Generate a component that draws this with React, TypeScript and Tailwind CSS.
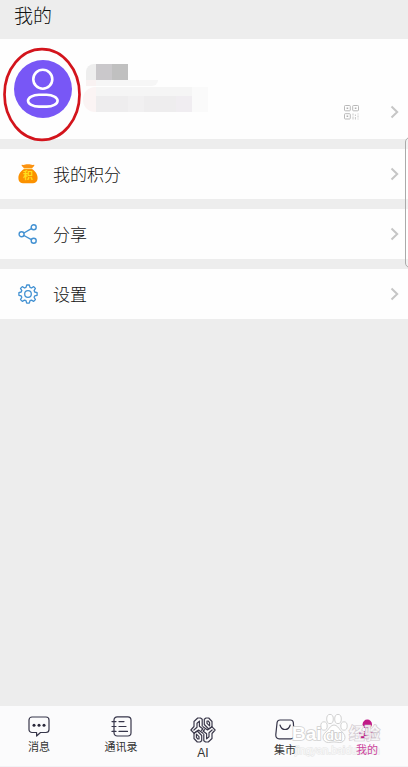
import type { ReactNode } from 'react';

const Chevron = () => (
  <svg className="h-[14px] w-[9px] shrink-0" viewBox="0 0 9 14" fill="none">
    <path d="M1.5 1.5 7.2 7l-5.7 5.5" stroke="#c6c6c6" strokeWidth="2" />
  </svg>
);

const Avatar = () => (
  <svg className="h-[58px] w-[58px]" viewBox="0 0 58 58" fill="none">
    <circle cx="29" cy="29" r="29" fill="#7857f6" />
    <g stroke="#fff" strokeWidth="2.6">
      <circle cx="28.8" cy="19.2" r="9.5" />
      <rect x="14" y="34.8" width="29.6" height="11.8" rx="11" ry="5.9" />
    </g>
  </svg>
);

const QrIcon = () => (
  <svg className="h-[15px] w-[15px]" viewBox="0 0 15 15" fill="none">
    <g stroke="#b9b9b9" strokeWidth="1">
      <rect x=".5" y=".5" width="5.8" height="5.3" rx=".8" />
      <rect x="8.7" y=".5" width="5.8" height="5.3" rx=".8" />
      <rect x=".5" y="8.7" width="5.8" height="5.3" rx=".8" />
    </g>
    <path d="M2.6 2.4h1.6v1.5H2.6zM10.8 2.4h1.6v1.5h-1.6zM2.6 10.6h1.6v1.5H2.6z" fill="#b0b0b0" />
    <path d="M9 8.5v2M9 11.5v3M11.4 9.5v1.5M11.4 12v2.5M14 8.5v1M14 10.5v2M14 13.5v1" stroke="#c8c8c8" />
  </svg>
);

const PointsIcon = () => (
  <span className="relative flex h-5 w-5 items-center justify-center">
    <svg className="absolute inset-0" viewBox="0 0 20 20">
      <path d="M4.3.7C6.2 1.3 7.3.2 10 .2s3.8 1.1 5.7.5c.8 0 .8.6.4 1.2L14 4.3H6L3.9 1.9C3.5 1.3 3.5.7 4.3.7Z" fill="#fb9211" />
      <path d="M6 5.1h8c3.2 1.8 5.6 5.3 5.6 8.9 0 3.900-2.400 5.300-5.600 5.300H6c-3.200 0-5.600-1.400-5.600-5.300C.4 10.400 2.800 6.900 6 5.100Z" fill="#fb9100" />
      <path d="M5.800 4.700h8.400" stroke="#ffd56a" strokeWidth=".8" />
    </svg>
    <span className="relative top-[2px] text-[10px] leading-none font-bold text-[#ffdf1e]">积</span>
  </span>
);

const ShareIcon = () => (
  <svg className="h-5 w-5" viewBox="0 0 20 20" fill="none" stroke="#4291d2" strokeWidth="1.4">
    <circle cx="3.6" cy="10.3" r="2.5" />
    <circle cx="15.7" cy="3.3" r="2.5" />
    <circle cx="15.7" cy="16.8" r="2.5" />
    <path d="m5.900 9 7.500-4.400M5.900 11.500l7.500 4.100" />
  </svg>
);

const SettingsIcon = () => (
  <svg className="h-5 w-5" viewBox="0 0 20 20" fill="none" stroke="#4291d2" strokeWidth="1.3" strokeLinejoin="round">
    <path d="M8.700 1h2.600l.7 2.400 1.400.6 2.300-1.400 1.700 1.800-1.300 2.200.6 1.400 2.400.6v2.700l-2.400.6-.6 1.400 1.300 2.300-1.700 1.800-2.300-1.300-1.400.6-.7 2.400H8.700L8 16.700l-1.400-.6-2.300 1.300-1.800-1.800 1.300-2.300-.6-1.400-2.300-.6V8.600L3.200 8l.6-1.400-1.300-2.200 1.800-1.800L6.600 4 8 3.400Z" />
    <circle cx="10" cy="10" r="3.3" />
  </svg>
);

const MessageIcon = () => (
  <svg className="h-[21px] w-[22px]" viewBox="0 0 22 21" fill="none">
    <path d="M4 1h14a3 3 0 0 1 3 3v9.500a3 3 0 0 1-3 3h-5.500L8.600 20v-3.500H4a3 3 0 0 1-3-3V4a3 3 0 0 1 3-3Z" stroke="#37364a" strokeWidth="1.2" strokeLinejoin="round" />
    <g fill="#29283a">
      <circle cx="6" cy="9.3" r="1.5" />
      <circle cx="11" cy="9.3" r="1.5" />
      <circle cx="16" cy="9.3" r="1.5" />
    </g>
  </svg>
);

const ContactsIcon = () => (
  <svg className="h-[21px] w-[21px]" viewBox="0 0 21 21" fill="none" stroke="#37364a" strokeWidth="1.2" strokeLinecap="round">
    <rect x="3" y=".8" width="17" height="19.2" rx="3.2" />
    <path d="M1 5.600h4M1 10.500h4M1 15.400h4M8 5.600h5M8 10.500h7M8 15.400h8.500" />
  </svg>
);

const AiIcon = () => (
  <svg className="h-[26px] w-[26px]" viewBox="0 0 26 26" fill="none" stroke="#3b394b" strokeWidth="1.2" strokeLinejoin="round" strokeLinecap="round">
    {['', 'rotate(180 13 13)'].map((transform) => (
      <g key={transform} transform={transform}>
        <path d="M12.200 9V2.300L10.500 1H7.700L4 4.500v5L.9 13l3.300 3.300L8.500 13l4.500 3.300" />
        <path d="M9.400 4.200 7 6.200v4L3.900 13M9.400 4.200v5L13 12l-1.600 1.300" />
        <path d="M14.300 7.500V2.300L16 1h2.700L22 4.500v5.200L18.700 12l-4.400-4.500M17 4v2.400l2.600 2.500V5.600L18.200 4Z" />
      </g>
    ))}
  </svg>
);

const MarketIcon = () => (
  <svg className="h-[21px] w-[20px]" viewBox="0 0 20 21" fill="none" stroke="#37364a" strokeWidth="1.2" strokeLinecap="round">
    <path d="M5 1h10.500c1.700 0 2.600.8 2.800 2.400l.9 12.200c.2 2.600-1 4.300-3.400 4.300H4.200C1.800 19.900.6 18.200.8 15.600L2.100 3.400C2.400 1.800 3.300 1 5 1Z" />
    <path d="M5 6c.8 3 2.500 4.500 5 4.500S14.400 9 15.200 6" />
  </svg>
);

const MineIcon = () => (
  <svg className="h-[21px] w-[20px]" viewBox="0 0 20 21" fill="#c01887">
    <circle cx="10.3" cy="5.3" r="4.7" />
    <path d="M8.600 9H12l.5 3 4 .5c1.600.3 2.200 1.500 2.200 3.200v1.700c0 1.200-.6 1.800-1.800 1.800H3.700c-1.200 0-1.800-.6-1.800-1.800v-1.700c0-1.700.6-2.900 2.200-3.200l4-.5Z" />
  </svg>
);

const rows = [
  { label: '我的积分', icon: PointsIcon },
  { label: '分享', icon: ShareIcon },
  { label: '设置', icon: SettingsIcon }
];

type TabProps = { label: string; children: ReactNode; className?: string; labelClass?: string };

const Tab = ({ label, children, className = 'pt-[10px]', labelClass = 'text-[11px] text-[#333]' }: TabProps) => (
  <button className={`flex w-[82px] shrink-0 flex-col items-center ${className}`}>
    {children}
    <span className={`relative z-10 mt-[2px] leading-4 ${labelClass}`}>{label}</span>
  </button>
);

const Watermark = () => (
  <div className="pointer-events-none absolute top-[5px] left-[291px] h-[50px] w-[92px]">
    <svg className="absolute top-[2px] left-[29px] h-[31px] w-[28px]" viewBox="0 0 28 31" fill="#fff" fillOpacity=".92" stroke="#d2d2d2" strokeWidth="1">
      <ellipse cx="4" cy="13" rx="3.2" ry="4.2" />
      <ellipse cx="10" cy="6" rx="3.3" ry="4.6" />
      <ellipse cx="18" cy="6" rx="3.3" ry="4.6" />
      <ellipse cx="24" cy="13" rx="3.2" ry="4.2" />
      <path d="M14 12c-3 0-4.500 3-6.500 5.300C5.300 19.600 3 21.300 3 24.300c0 3.300 2.400 5.200 5.300 5.200 2.300 0 3.400-.6 5.700-.6s3.400.6 5.700.6c2.900 0 5.300-1.900 5.300-5.200 0-3-2.300-4.700-4.500-7C18.500 15 17 12 14 12Z" />
    </svg>
    <span className="absolute top-[13px] left-px text-[19px] leading-5 font-bold text-white [-webkit-text-stroke:1.6px_#d0d0d0] [paint-order:stroke_fill]">Bai</span>
    <span className="absolute top-[18px] left-[35px] text-[13px] leading-[14px] font-bold text-white [-webkit-text-stroke:1.6px_#c8c8c8] [paint-order:stroke_fill]">du</span>
    <span className="absolute top-[13px] left-[58px] text-[15.5px] leading-5 font-bold whitespace-nowrap text-white/75 [-webkit-text-stroke:1.2px_#d0c8ce] [paint-order:stroke_fill]">经验</span>
    <span className="absolute top-[33px] left-[4px] text-[10.5px] leading-3 text-white/80 [-webkit-text-stroke:1px_#e4e4e4] [paint-order:stroke_fill]">jingyan.baidu.com</span>
  </div>
);

const App = () => {
  return (
    <div className="relative flex h-[767px] w-[408px] flex-col overflow-hidden bg-[#ededed] font-['Liberation_Sans','Noto_Sans_CJK_SC',sans-serif] text-[#333]">
      <header className="flex h-[39px] shrink-0 items-start pt-[5px] pl-[14px]">
        <h1 className="text-[19px] leading-6 font-light text-[#111]">我的</h1>
      </header>

      <section className="relative flex h-[100px] shrink-0 bg-[#fefefe] pl-[14px]">
        <div className="pt-[21px]">
          <Avatar />
        </div>

        {/* Masked name and account number */}
        <div className="ml-[14px] pt-[25px]">
          <div className="flex h-4 overflow-hidden rounded-tl-lg">
            <div className="w-[10px] bg-[#eee]" />
            <div className="w-4 bg-[#cac8cb]" />
            <div className="w-4 bg-[#c0c0c0]" />
          </div>
          <div className="flex h-[6px]">
            <div className="w-[10px] bg-[#f9f2f2]" />
            <div className="w-[62px] rounded-br-full bg-[#f6f6f6]" />
          </div>
          <div className="-ml-[3px] mt-px flex h-[25px] overflow-hidden rounded-l-xl">
            <div className="w-[13px] bg-[#fbf4f4]" />
            <div className="flex w-24 flex-col">
              <div className="h-[9px] bg-[#f5f5f5]" />
              <div className="flex h-4">
                <div className="w-8 bg-[#eeedee]" />
                <div className="w-4 bg-[#f1f0f1]" />
                <div className="w-8 bg-[#eeedee]" />
                <div className="w-4 bg-[#f0edf1]" />
              </div>
            </div>
            <div className="w-4 bg-[#fafafa]" />
          </div>
        </div>

        <div className="mt-[65px] mr-[9px] ml-auto flex h-4 items-center gap-[31px]">
          <QrIcon />
          <Chevron />
        </div>
        <svg className="absolute top-[8px] left-[2px] h-[95px] w-[80px]" viewBox="0 0 80 95" fill="none">
          <ellipse cx="40" cy="47.5" rx="37.5" ry="45.3" stroke="#d3141c" strokeWidth="2.7" />
        </svg>
      </section>

      <main className="mt-[10px] flex flex-col gap-[10px]">
        {rows.map((row) => (
          <button key={row.label} className="flex h-[50px] items-center bg-[#fefefe] pr-[9px] pl-[18px]">
            <row.icon />
            <span className="mt-[4px] ml-[15px] text-[17px] leading-6 font-light text-[#111]">{row.label}</span>
            <span className="ml-auto">
              <Chevron />
            </span>
          </button>
        ))}
      </main>

      <nav className="relative mt-auto h-[61px] shrink-0 border-b border-[#f1f2f5] bg-[#fbfbfc]">
        <div className="-ml-[2px] flex items-start">
          <Tab label="消息">
            <MessageIcon />
          </Tab>
          <Tab label="通讯录">
            <ContactsIcon />
          </Tab>
          <Tab label="AI" className="pt-[11px]" labelClass="text-[12px] text-[#333]">
            <AiIcon />
          </Tab>
          <Tab label="集市" className="pt-[13px]">
            <MarketIcon />
          </Tab>
          <Tab label="我的" className="pt-[13px]" labelClass="text-[11px] text-[#cc459d]">
            <MineIcon />
          </Tab>
        </div>
        <Watermark />
      </nav>

      {/* Edge handle of the side panel */}
      <div className="absolute top-[137px] -right-[6px] h-[131px] w-[9px] rounded-l-[5px] border border-[#aaa] bg-white/30" />
    </div>
  );
};

export default App;
